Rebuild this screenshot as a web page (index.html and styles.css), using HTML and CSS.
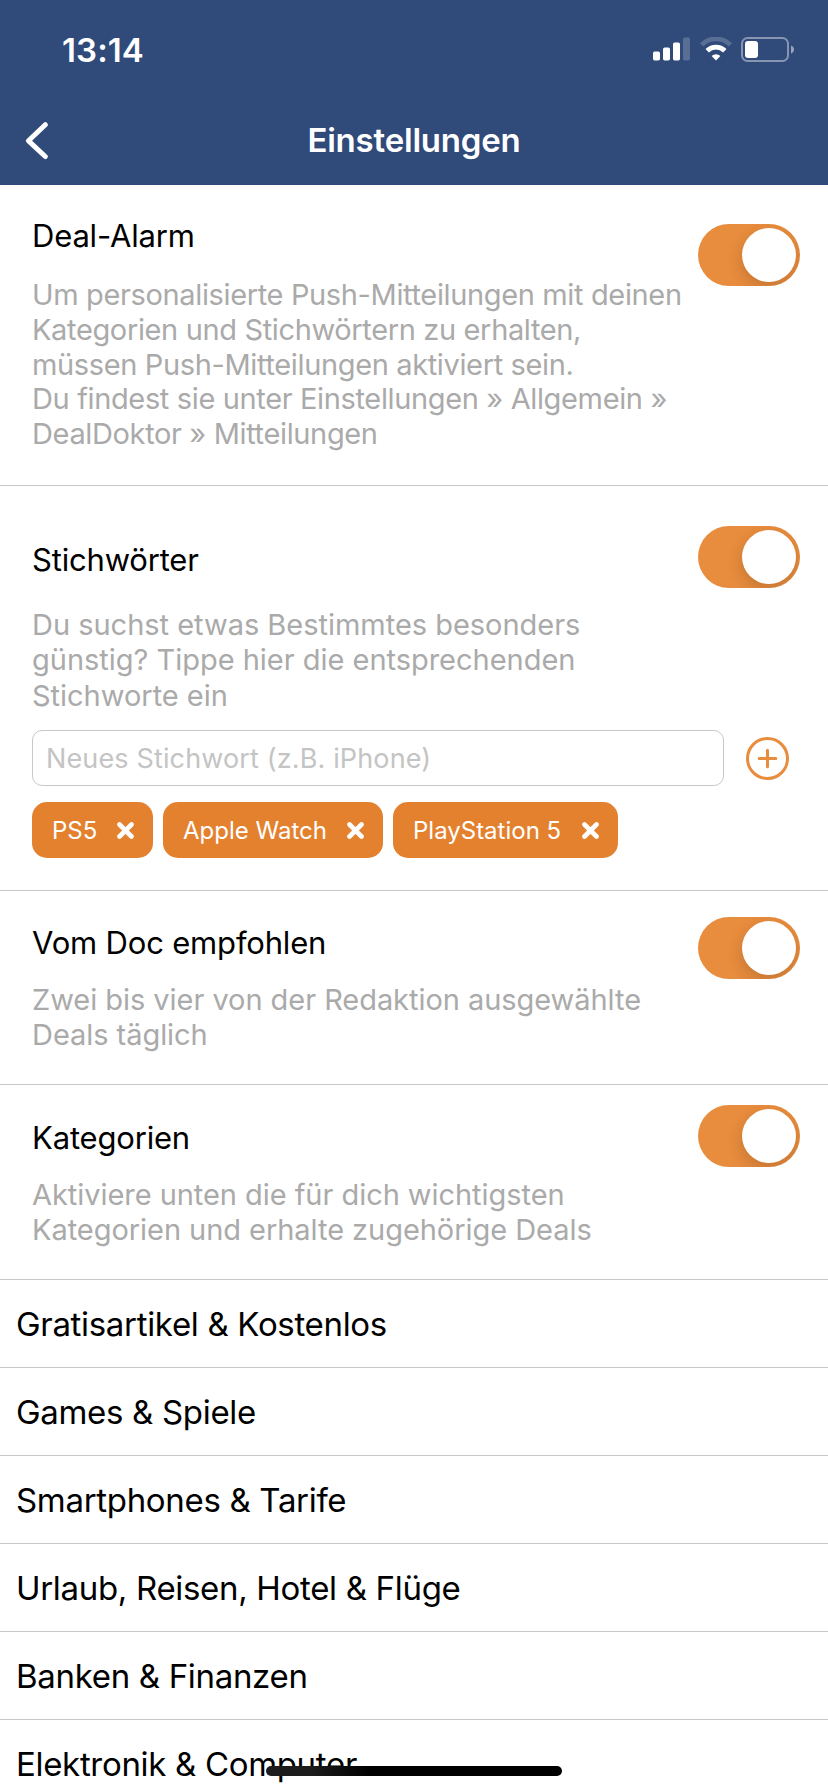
FILE: index.html
```
<!DOCTYPE html>
<html lang="de">
<head>
  <meta charset="UTF-8" />
  <meta name="viewport" content="width=device-width, initial-scale=1.0"/>
  <title>Einstellungen</title>
  <link rel="stylesheet" href="styles.css">
</head>
<body>

  <div class="app">
    <header class="header">
      <div class="statusbar">
        <div class="time">13:14</div>
        <div class="status-icons">
          <svg width="37" height="24" viewBox="0 0 37 24" fill="#fff">
            <rect x="0" y="14.5" width="7" height="9" rx="1.7"/>
            <rect x="10" y="10.5" width="7" height="13" rx="1.7"/>
            <rect x="20" y="5.5" width="7" height="18" rx="1.7"/>
            <rect x="30" y="0.5" width="7" height="23" rx="1.7" opacity="0.2"/>
          </svg>
          <svg class="wifi" width="32" height="24" viewBox="0 0 32 24" fill="none" stroke="#fff">
            <path d="M1.6 7.9 A20.2 20.2 0 0 1 30.4 7.9" stroke-width="4.6" opacity="0.2"/>
            <path d="M7.2 13.7 A12.4 12.4 0 0 1 24.8 13.7" stroke-width="4.8"/>
            <path d="M16 23.5 L11.6 19 A6.3 6.3 0 0 1 20.4 19 Z" fill="#fff" stroke="none"/>
          </svg>
          <svg width="54" height="25" viewBox="0 0 54 25">
            <rect x="1" y="1" width="46" height="23" rx="5.5" fill="none" stroke="#fff" stroke-width="2" opacity="0.42"/>
            <rect x="4" y="4" width="13" height="17" rx="3" fill="#fff"/>
            <path d="M50 8.5 C54 9.8 54 15.2 50 16.5 Z" fill="#fff" opacity="0.5"/>
          </svg>
        </div>
      </div>
      <div class="navbar">
        <svg class="back" width="24" height="40" viewBox="0 0 24 40" fill="none" stroke="#fff" stroke-width="5" stroke-linecap="round" stroke-linejoin="round">
          <path d="M20.3 4.7 L3.5 20.8 L20.3 36.5"/>
        </svg>
        <h1>Einstellungen</h1>
      </div>
    </header>

    <section class="setting alarm">
      <div class="info">
        <h2>Deal-Alarm</h2>
        <p>Um personalisierte Push-Mitteilungen mit deinen<br>Kategorien und Stichwörtern zu erhalten,<br>müssen Push-Mitteilungen aktiviert sein.<br>Du findest sie unter Einstellungen » Allgemein »<br>DealDoktor » Mitteilungen</p>
      </div>
      <div class="toggle"></div>
    </section>

    <section class="setting keywords">
      <div class="info">
        <h2>Stichwörter</h2>
        <p>Du suchst etwas Bestimmtes besonders<br>günstig? Tippe hier die entsprechenden<br>Stichworte ein</p>
      </div>
      <div class="toggle"></div>
      <div class="add-row">
        <input type="text" placeholder="Neues Stichwort (z.B. iPhone)">
        <svg width="44" height="44" viewBox="0 0 44 44" fill="none" stroke="#e88c3d" stroke-width="3" stroke-linecap="round">
          <circle cx="21.5" cy="22.5" r="20"/>
          <path d="M13.2 22.5 H29.8 M21.5 14.2 V30.8"/>
        </svg>
      </div>
      <div class="chips">
        <span class="chip">PS5 <svg width="17" height="17" viewBox="0 0 17 17"><path d="M2.5 2.5 L14.5 14.5 M14.5 2.5 L2.5 14.5"/></svg></span>
        <span class="chip watch">Apple Watch <svg width="17" height="17" viewBox="0 0 17 17"><path d="M2.5 2.5 L14.5 14.5 M14.5 2.5 L2.5 14.5"/></svg></span>
        <span class="chip playstation">PlayStation 5 <svg width="17" height="17" viewBox="0 0 17 17"><path d="M2.5 2.5 L14.5 14.5 M14.5 2.5 L2.5 14.5"/></svg></span>
      </div>
    </section>

    <section class="setting doc">
      <div class="info">
        <h2>Vom Doc empfohlen</h2>
        <p>Zwei bis vier von der Redaktion ausgewählte<br>Deals täglich</p>
      </div>
      <div class="toggle"></div>
    </section>

    <section class="setting categories">
      <div class="info">
        <h2>Kategorien</h2>
        <p>Aktiviere unten die für dich wichtigsten<br>Kategorien und erhalte zugehörige Deals</p>
      </div>
      <div class="toggle"></div>
    </section>

    <ul class="list">
      <li>Gratisartikel &amp; Kostenlos</li>
      <li>Games &amp; Spiele</li>
      <li>Smartphones &amp; Tarife</li>
      <li>Urlaub, Reisen, Hotel &amp; Flüge</li>
      <li>Banken &amp; Finanzen</li>
      <li>Elektronik &amp; Computer</li>
    </ul>

    <div class="home-indicator"></div>
  </div>

</body>
</html>
```
FILE: styles.css
```
* {
  box-sizing: border-box;
  font-family: Inter, "Liberation Sans", sans-serif;
}

body {
  background: white;
  margin: 0;
  padding: 0;
}

.app {
  position: relative;
  width: 828px;
  height: 1792px;
  overflow: hidden;
  color: black;
}

h1, h2, p, ul {
  margin: 0;
  padding: 0;
  font-weight: 400;
}

svg {
  display: block;
  flex: none;
}

/* Header */
.header {
  height: 185px;
  background-color: #304a7a;
  color: white;
}

.statusbar {
  height: 95px;
  display: flex;
  justify-content: space-between;
  padding: 30px 33px 0 62px;
}

.time {
  font-size: 33px;
  line-height: 40px;
  font-weight: 600;
  letter-spacing: 0.1px;
}

.status-icons {
  display: flex;
  padding-top: 7px;
}

.wifi {
  margin: 0 9px 0 10px;
}

.navbar {
  height: 89px;
  display: grid;
  grid-template-columns: 100px 1fr 100px;
  align-items: center;
}

.back {
  margin-left: 25px;
}

h1 {
  font-size: 33px;
  line-height: 40px;
  font-weight: 600;
  letter-spacing: -0.2px;
  text-align: center;
}

/* Settings */
.setting {
  display: flex;
  flex-wrap: wrap;
  align-items: flex-start;
  align-content: flex-start;
  justify-content: space-between;
  padding: 0 28px 0 32px;
  border-bottom: 1px solid #c8c8c8;
}

.info {
  width: 660px;
  white-space: nowrap;
}

h2 {
  font-size: 31px;
  line-height: 40px;
  letter-spacing: -0.18px;
}

p {
  color: #aaa;
  font-size: 29px;
  line-height: 34.8px;
  letter-spacing: -0.05px;
}

.toggle {
  width: 102px;
  height: 62px;
  padding: 4px;
  border-radius: 31px;
  background-color: #e88c3d;
  overflow: hidden;
}

.toggle::after {
  content: "";
  display: block;
  width: 54px;
  height: 54px;
  margin-left: auto;
  border-radius: 50%;
  background-color: white;
  box-shadow: 0 6px 16px rgba(0, 0, 0, 0.16);
}

.alarm {
  height: 301px;
  padding-top: 31px;
}

.alarm .toggle {
  margin-top: 8px;
}

.alarm p {
  margin-top: 22px;
  letter-spacing: -0.36px;
}

.keywords {
  height: 405px;
  padding-top: 40px;
}

.keywords .info {
  padding-top: 14px;
  height: 204px;
}

.keywords p {
  margin-top: 27px;
  line-height: 35.3px;
  letter-spacing: -0.02px;
}

.doc {
  height: 194px;
  padding-top: 26px;
}

.doc .info {
  padding-top: 6px;
}

.doc p {
  margin-top: 20px;
}

.categories {
  height: 195px;
  padding-top: 20px;
}

.categories .info {
  padding-top: 13px;
}

.categories p {
  margin-top: 20px;
}

/* Keyword input */
.add-row {
  width: 100%;
  display: flex;
  align-items: center;
  gap: 22px;
}

input {
  width: 692px;
  height: 56px;
  padding: 0 13px;
  border: 1px solid #c8c8c8;
  border-radius: 10px;
  font-size: 27px;
  letter-spacing: 0.14px;
  outline: none;
}

input::placeholder {
  color: #c4c4c4;
}

.chips {
  width: 100%;
  display: flex;
  gap: 10px;
  margin-top: 16px;
}

.chip {
  width: 121px;
  height: 56px;
  display: flex;
  align-items: center;
  justify-content: space-between;
  padding: 0 19px 0 20px;
  border-radius: 15px;
  background-color: #e4812f;
  color: white;
  font-size: 24px;
  white-space: nowrap;
}

.chip.watch {
  width: 220px;
}

.chip.playstation {
  width: 225px;
}

.chip path {
  stroke: white;
  stroke-width: 4.6;
  stroke-linecap: round;
}

/* Category list */
.list {
  list-style: none;
}

.list li {
  height: 88px;
  padding: 24px 16px 0;
  border-bottom: 1px solid #c8c8c8;
  font-size: 33px;
  line-height: 40px;
  letter-spacing: -0.32px;
}

.home-indicator {
  position: absolute;
  left: 266px;
  bottom: 16px;
  width: 296px;
  height: 10px;
  border-radius: 5px;
  background: linear-gradient(to right, #1c1c1c 15%, black 35%);
}
```
